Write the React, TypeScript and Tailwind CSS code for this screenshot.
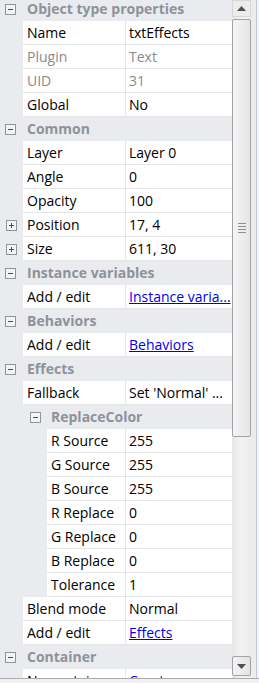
import React from "react";

type Row =
  | { kind: "header"; label: string; nested?: boolean }
  | {
      kind: "prop";
      name: string;
      value: string;
      muted?: boolean;
      link?: boolean;
      expand?: boolean;
      nested?: boolean;
    };

const rows: Row[] = [
  { kind: "header", label: "Object type properties" },
  { kind: "prop", name: "Name", value: "txtEffects" },
  { kind: "prop", name: "Plugin", value: "Text", muted: true },
  { kind: "prop", name: "UID", value: "31", muted: true },
  { kind: "prop", name: "Global", value: "No" },
  { kind: "header", label: "Common" },
  { kind: "prop", name: "Layer", value: "Layer 0" },
  { kind: "prop", name: "Angle", value: "0" },
  { kind: "prop", name: "Opacity", value: "100" },
  { kind: "prop", name: "Position", value: "17, 4", expand: true },
  { kind: "prop", name: "Size", value: "611, 30", expand: true },
  { kind: "header", label: "Instance variables" },
  { kind: "prop", name: "Add / edit", value: "Instance varia...", link: true },
  { kind: "header", label: "Behaviors" },
  { kind: "prop", name: "Add / edit", value: "Behaviors", link: true },
  { kind: "header", label: "Effects" },
  { kind: "prop", name: "Fallback", value: "Set 'Normal' ..." },
  { kind: "header", label: "ReplaceColor", nested: true },
  { kind: "prop", name: "R Source", value: "255", nested: true },
  { kind: "prop", name: "G Source", value: "255", nested: true },
  { kind: "prop", name: "B Source", value: "255", nested: true },
  { kind: "prop", name: "R Replace", value: "0", nested: true },
  { kind: "prop", name: "G Replace", value: "0", nested: true },
  { kind: "prop", name: "B Replace", value: "0", nested: true },
  { kind: "prop", name: "Tolerance", value: "1", nested: true },
  { kind: "prop", name: "Blend mode", value: "Normal" },
  { kind: "prop", name: "Add / edit", value: "Effects", link: true },
  { kind: "header", label: "Container" },
  { kind: "prop", name: "No container", value: "Create", link: true },
];

function Box({ plus }: { plus?: boolean }) {
  return (
    <svg width="11" height="11" viewBox="0 0 11 11" className="shrink-0">
      <rect x="0.5" y="0.5" width="10" height="10" fill="#f4f5f7" stroke="#8f939a" />
      <path d="M3 5.5h5" stroke="#3b4b6b" strokeWidth="1" />
      {plus && <path d="M5.5 3v5" stroke="#3b4b6b" strokeWidth="1" />}
    </svg>
  );
}

function Arrow({ down }: { down?: boolean }) {
  return (
    <svg width="9" height="5" viewBox="0 0 9 5">
      {down ? <path d="M0 0h9L4.5 5z" fill="#505050" /> : <path d="M0 5h9L4.5 0z" fill="#505050" />}
    </svg>
  );
}

function GridRow({ row }: { row: Row }) {
  if (row.kind === "header") {
    return (
      <div className="flex h-6 items-center bg-[#e9ebef]">
        <div className={row.nested ? "flex w-[51px] shrink-0 pl-[30px]" : "flex w-[27px] shrink-0 pl-[5px]"}>
          <Box />
        </div>
        <span className="whitespace-nowrap text-[14px] font-bold text-[#8e9299]">{row.label}</span>
      </div>
    );
  }
  return (
    <div className="flex h-6 bg-[#e9ebef]">
      <div className={row.nested ? "w-[47px] shrink-0" : "flex w-[23px] shrink-0 items-center pl-[6px]"}>
        {row.expand && <Box plus />}
      </div>
      <div className="flex flex-1 border-b border-[#e4e6ea] bg-white">
        <div
          className={`flex flex-1 items-center overflow-hidden whitespace-nowrap border-r border-[#e4e6ea] pl-1 ${
            row.muted ? "text-[#8a8a8a]" : "text-black"
          }`}
        >
          {row.name}
        </div>
        <div
          className={`flex w-[106px] shrink-0 items-center overflow-hidden whitespace-nowrap pl-[3px] ${
            row.link ? "text-[#0000ee] underline" : row.muted ? "text-[#8a8a8a]" : "text-black"
          }`}
        >
          {row.value}
        </div>
      </div>
    </div>
  );
}

export default function App() {
  return (
    <div className="flex h-[683px] w-[259px] flex-col bg-[#f0f0f0] font-['Open_Sans',sans-serif] text-[14px] leading-none">
      <div className="flex h-[679px] border-b border-[#a9abaf]">
        {/* Grid */}
        <div className="w-[232px] overflow-hidden bg-[#e9ebef]">
          <div className="-mt-[3px]">
            {rows.map((r, i) => (
              <GridRow key={i} row={r} />
            ))}
          </div>
        </div>

        {/* Scrollbar */}
        <div className="flex w-[19px] flex-col bg-gradient-to-r from-[#e7e7e7] via-[#f3f3f3] to-[#ececec]">
          <div className="flex h-[17px] items-center justify-center border border-[#d7d7d7] bg-[#ececec]">
            <Arrow />
          </div>
          <div className="mt-[2px] flex h-[418px] items-center justify-center rounded-[2px] border border-[#a2a2a2] bg-gradient-to-r from-[#f5f5f5] to-[#e6e6e6]">
            <div className="flex flex-col gap-[2px]">
              <div className="h-px w-[8px] bg-[#8d8d8d]" />
              <div className="h-px w-[8px] bg-[#8d8d8d]" />
              <div className="h-px w-[8px] bg-[#8d8d8d]" />
              <div className="h-px w-[8px] bg-[#8d8d8d]" />
            </div>
          </div>
          <div className="flex-1" />
          <div className="mb-[2px] flex h-[20px] items-center justify-center rounded-[2px] border border-[#a2a2a2] bg-gradient-to-r from-[#f3f3f3] to-[#e4e4e4]">
            <Arrow down />
          </div>
        </div>

        {/* Right edge */}
        <div className="flex flex-1">
          <div className="w-[5px] bg-[#ececec]" />
          <div className="w-px bg-[#b7cbe3]" />
          <div className="flex-1 bg-[#f5f5f5]" />
        </div>
      </div>
      <div className="flex-1 bg-[#f0f0f0]" />
    </div>
  );
}
